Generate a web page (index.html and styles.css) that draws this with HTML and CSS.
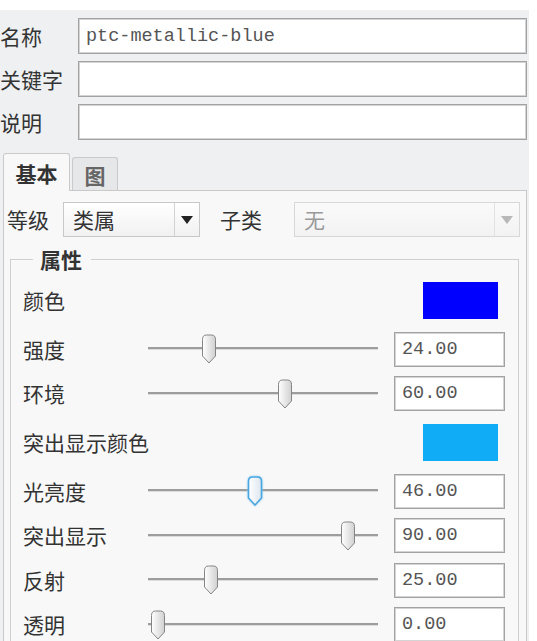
FILE: index.html
```html
<!DOCTYPE html>
<html lang="zh">
<head>
<meta charset="utf-8">
<link rel="stylesheet" href="styles.css">
</head>
<body>
<div class="panel">
  <div class="fields">
    <span class="lbl">名称</span><div class="text-input">ptc-metallic-blue</div>
    <span class="lbl">关键字</span><div class="text-input"></div>
    <span class="lbl">说明</span><div class="text-input"></div>
  </div>
  <div class="tabs">
    <div class="tab active">基本</div>
    <div class="tab">图</div>
  </div>
  <div class="tab-body">
    <div class="class-row">
      <span class="lbl">等级</span>
      <div class="select"><span class="sel-text">类属</span><span class="sel-btn"><span class="tri"></span></span></div>
      <span class="lbl sub">子类</span>
      <div class="select disabled"><span class="sel-text">无</span><span class="sel-btn"><span class="tri"></span></span></div>
    </div>
    <fieldset class="props">
      <legend>属性</legend>
      <div class="grid">
        <span class="lbl row-c">颜色</span><span></span><div class="swatch row-c blue"></div>

        <span class="lbl">强度</span>
        <div class="slider"><div class="track"></div><svg class="thumb" style="--v:24" viewBox="0 0 16 30"><defs><linearGradient id="g1" x1="0" y1="0" x2="1" y2="0"><stop offset="0" stop-color="#ffffff"/><stop offset="1" stop-color="#d0d0d0"/></linearGradient></defs><path d="M1.5 5.5Q1.5 1 5.5 1H10.5Q14.5 1 14.5 5.5V22L8 29L1.5 22Z" fill="url(#g1)" stroke="#858585"/></svg></div>
        <div class="value">24.00</div>

        <span class="lbl">环境</span>
        <div class="slider"><div class="track"></div><svg class="thumb" style="--v:60" viewBox="0 0 16 30"><path d="M1.5 5.5Q1.5 1 5.5 1H10.5Q14.5 1 14.5 5.5V22L8 29L1.5 22Z" fill="url(#g1)" stroke="#858585"/></svg></div>
        <div class="value">60.00</div>

        <span class="lbl row-c">突出显示颜色</span><span></span><div class="swatch row-c cyan"></div>

        <span class="lbl">光亮度</span>
        <div class="slider"><div class="track"></div><svg class="thumb focus" style="--v:46" viewBox="0 0 16 30"><defs><linearGradient id="g2" x1="0" y1="0" x2="1" y2="0"><stop offset="0" stop-color="#ffffff"/><stop offset="1" stop-color="#dde6ee"/></linearGradient></defs><path d="M1.5 5.5Q1.5 1 5.5 1H10.5Q14.5 1 14.5 5.5V22L8 29L1.5 22Z" fill="url(#g2)" stroke="#4aa6e0" stroke-width="1.6"/></svg></div>
        <div class="value">46.00</div>

        <span class="lbl">突出显示</span>
        <div class="slider"><div class="track"></div><svg class="thumb" style="--v:90" viewBox="0 0 16 30"><path d="M1.5 5.5Q1.5 1 5.5 1H10.5Q14.5 1 14.5 5.5V22L8 29L1.5 22Z" fill="url(#g1)" stroke="#858585"/></svg></div>
        <div class="value">90.00</div>

        <span class="lbl">反射</span>
        <div class="slider"><div class="track"></div><svg class="thumb" style="--v:25" viewBox="0 0 16 30"><path d="M1.5 5.5Q1.5 1 5.5 1H10.5Q14.5 1 14.5 5.5V22L8 29L1.5 22Z" fill="url(#g1)" stroke="#858585"/></svg></div>
        <div class="value">25.00</div>

        <span class="lbl">透明</span>
        <div class="slider"><div class="track"></div><svg class="thumb" style="--v:0" viewBox="0 0 16 30"><path d="M1.5 5.5Q1.5 1 5.5 1H10.5Q14.5 1 14.5 5.5V22L8 29L1.5 22Z" fill="url(#g1)" stroke="#858585"/></svg></div>
        <div class="value">0.00</div>
      </div>
    </fieldset>
  </div>
</div>
</body>
</html>
```
FILE: styles.css
```css
html, body {
  margin: 0;
  padding: 0;
  background: #ffffff;
  overflow: hidden;
}
body {
  font-family: "Noto Sans CJK SC", "Noto Sans", sans-serif;
  font-size: 21px;
  color: #333333;
}
.panel {
  margin-top: 10px;
  width: 529px;
  height: 631px;
  padding: 8px 2px 0 0;
  box-sizing: border-box;
  background: #eef0f2;
  overflow: hidden;
}
.lbl {
  display: flex;
  align-items: center;
  white-space: nowrap;
  line-height: 1;
}
.fields {
  display: grid;
  grid-template-columns: 78px 1fr;
  grid-auto-rows: 36px;
  row-gap: 7px;
}
.text-input, .value {
  background: #ffffff;
  border: 1px solid #a2a2a2;
  box-shadow: inset 0 0 0 1px #d4d4d4;
  box-sizing: border-box;
  font-family: "Liberation Mono", "DejaVu Sans Mono", monospace;
  font-size: 18.5px;
  color: #555555;
  display: flex;
  align-items: center;
  padding-left: 7px;
}
.tabs {
  display: flex;
  align-items: flex-end;
  gap: 2px;
  margin: 13px 0 0 3px;
  height: 37px;
  position: relative;
  z-index: 1;
}
.tab {
  box-sizing: border-box;
  height: 33px;
  width: 46px;
  border: 1px solid #cacaca;
  border-bottom: none;
  background: #e6e7e8;
  border-radius: 3px 3px 0 0;
  font-weight: bold;
  color: #666666;
  display: flex;
  align-items: center;
  justify-content: center;
  padding-top: 2px;
}
.tab.active {
  width: 67px;
  height: 38px;
  margin-bottom: -1px;
  background: #f8f8f8;
  color: #333333;
  padding-top: 0;
}
.tab-body {
  margin-left: 3px;
  width: 524px;
  height: 470px;
  box-sizing: border-box;
  border: 1px solid #c9c9c9;
  background: #f8f8f8;
  padding: 11px 0 0 0;
}
.class-row {
  display: grid;
  grid-template-columns: 59px 137px 94px 226px;
  height: 35px;
}
.class-row .lbl {
  padding-left: 3px;
}
.class-row .sub {
  padding-left: 20px;
}
.select {
  display: flex;
  border: 1px solid #c8c8c8;
  background: linear-gradient(#ffffff, #f1f1f1);
  box-sizing: border-box;
}
.sel-text {
  flex: 1;
  display: flex;
  align-items: center;
  padding-left: 9px;
  line-height: 1;
}
.sel-btn {
  width: 24px;
  border-left: 1px solid #d2d2d2;
  display: flex;
  align-items: center;
  justify-content: center;
}
.tri {
  width: 0;
  height: 0;
  border-left: 6px solid transparent;
  border-right: 6px solid transparent;
  border-top: 8px solid #222222;
}
.select.disabled {
  border-color: #d8d8d8;
  background: linear-gradient(#fafafa, #f2f2f2);
}
.select.disabled .sel-text {
  color: #9a9a9a;
}
.select.disabled .tri {
  border-top-color: #b8b8b8;
}
.select.disabled .sel-btn {
  border-left-color: #e2e2e2;
}
.props {
  margin: 8px 0 0 6px;
  width: 509px;
  box-sizing: border-box;
  border: 1px solid #cfcfcf;
  padding: 0 13px 0 12px;
  min-width: 0;
}
.props legend {
  margin-left: 10px;
  padding: 0 9px 0 7px;
  font-weight: bold;
  line-height: 28px;
}
.grid {
  display: grid;
  grid-template-columns: 109px 230px 111px;
  column-gap: 16px;
  grid-template-rows: 53px 44.5px 44.5px 53px 44.5px 44.5px 44.5px 44.5px;
  align-items: center;
  padding-top: 1px;
}
.grid .lbl {
  height: 100%;
}
.value {
  height: 35px;
}
.swatch {
  width: 75px;
  height: 37px;
  margin-left: 29px;
}
.swatch.blue { background: #0000fe; }
.swatch.cyan { background: #10acf6; }
.slider {
  position: relative;
  height: 100%;
}
.track {
  position: absolute;
  left: 0;
  right: 0;
  top: calc(50% - 2px);
  height: 2px;
  background: #9d9d9d;
  border-bottom: 1px solid #dcdcdc;
}
.thumb {
  position: absolute;
  width: 16px;
  height: 30px;
  top: calc(50% - 15px);
  left: calc(2px + var(--v) * 2.11px);
}
.thumb.focus {
  filter: drop-shadow(0 0 1px #8fd0f5);
}
```
